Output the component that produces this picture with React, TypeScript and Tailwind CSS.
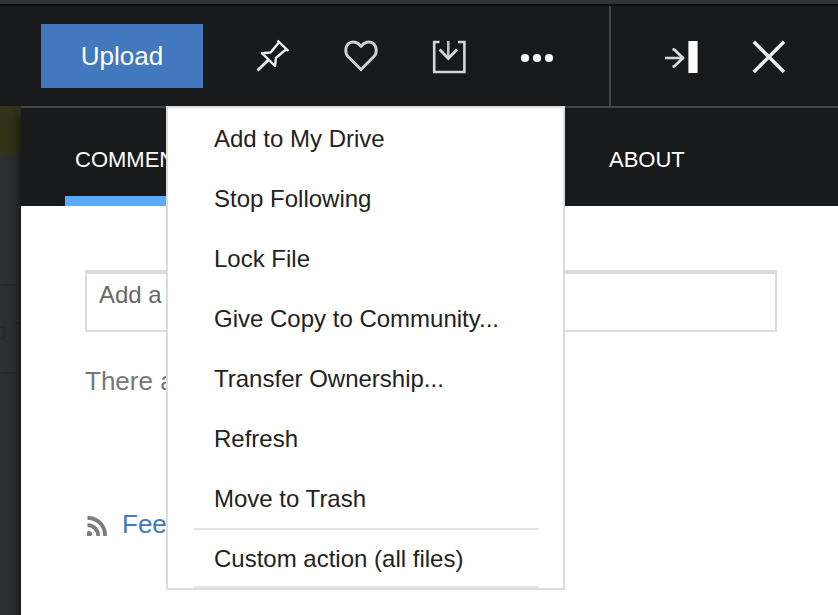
import type { ReactNode } from "react";

type MenuEntry = { label: string; separated?: boolean };

const entries: MenuEntry[] = [
  { label: "Add to My Drive" },
  { label: "Stop Following" },
  { label: "Lock File" },
  { label: "Give Copy to Community..." },
  { label: "Transfer Ownership..." },
  { label: "Refresh" },
  { label: "Move to Trash" },
  { label: "Custom action (all files)", separated: true },
];

function IconButton({ label, children }: { label: string; children: ReactNode }) {
  return (
    <button aria-label={label} className="flex h-16 w-[88px] shrink-0 items-center justify-center pt-0.5">
      {children}
    </button>
  );
}

function PinIcon() {
  return (
    <svg width="36" height="36" viewBox="0 0 36 36" fill="none" stroke="#f2f2f2" strokeWidth="2.4" className="shrink-0">
      <path d="M22.5 1.5L33.5 12M24 3.5L15.5 13.5L7 14.2L20 27L21 18.7L31 10.5" strokeLinejoin="round" />
      <path d="M13.5 20.8L2.5 31.5" strokeWidth="2.8" />
    </svg>
  );
}

function HeartIcon() {
  return (
    <svg width="36" height="36" viewBox="0 0 36 36" fill="none" stroke="#cfd0d0" strokeWidth="2.9" strokeLinejoin="round" className="shrink-0">
      <path d="M18 30.6L4.8 17.3C1.6 13.8 2.4 6.8 5.8 4.4C9.8 1.8 15 3 18 7.4C21 3 26.2 1.8 30.2 4.4C33.6 6.8 34.4 13.8 31.2 17.3Z" />
    </svg>
  );
}

function DownloadIcon() {
  return (
    <svg width="36" height="36" viewBox="0 0 36 36" fill="none" className="shrink-0">
      <path d="M8.5 3H3.2V33H33.4V3H27" stroke="#d4d7d8" strokeWidth="2.6" />
      <path d="M17.3 2V20" stroke="#bfc1c2" strokeWidth="2.6" />
      <path d="M8.6 10.5L17.3 19.4L26 10.5" stroke="#d5d7d8" strokeWidth="2.8" />
    </svg>
  );
}

function MoreIcon() {
  return (
    <svg width="36" height="36" viewBox="0 0 36 36" fill="#fafafa" className="shrink-0">
      <circle cx="6" cy="19" r="4.1" />
      <circle cx="18" cy="19" r="4.1" />
      <circle cx="30" cy="19" r="4.1" />
    </svg>
  );
}

function CollapseIcon() {
  return (
    <svg width="36" height="36" viewBox="0 0 36 36" fill="none" className="shrink-0">
      <path d="M2 19H21" stroke="#d2d2d2" strokeWidth="2.6" />
      <path d="M9.5 10.2L11.5 10.7L20 19L11.5 27.3L9.5 27.8" stroke="#dedede" strokeWidth="2.6" />
      <rect x="25.4" y="2" width="9.2" height="32" fill="#fff" />
    </svg>
  );
}

function CloseIcon() {
  return (
    <svg width="36" height="36" viewBox="0 0 36 36" stroke="#ededed" strokeWidth="3.5" className="shrink-0">
      <path d="M2.8 2.8L33 33M33 2.8L2.8 33" />
    </svg>
  );
}

function FeedIcon() {
  return (
    <svg width="20" height="20" viewBox="0 0 20 20" fill="none" stroke="#7d7d7d" strokeWidth="3.8" className="shrink-0">
      <path d="M0.5 2A17 17 0 0 1 18 20" />
      <path d="M0.5 9.2A10.5 10.5 0 0 1 11.2 20" />
      <circle cx="2.2" cy="17.8" r="2.8" fill="#7d7d7d" stroke="none" />
    </svg>
  );
}

function Menu() {
  return (
    <ul className="absolute top-[106px] left-[166px] z-20 w-[399px] border-2 border-[#dcdcdc] bg-white pr-6 pl-[26px] text-[24px] leading-[60px] text-[#222]">
      {entries.map((entry) => (
        <li
          key={entry.label}
          className={
            entry.separated
              ? "h-[60px] border-y-2 border-[#e3e3e3] pl-5 leading-[58px] whitespace-nowrap"
              : "h-[60px] pt-px pl-5 whitespace-nowrap"
          }
        >
          {entry.label}
        </li>
      ))}
    </ul>
  );
}

export default function App() {
  return (
    <div
      className="relative flex h-[615px] w-[838px] flex-col overflow-hidden bg-[#2e2f31]"
      style={{ fontFamily: '"Liberation Sans", Arial, sans-serif' }}
    >
      <div className="h-1.5 shrink-0 border-b-2 border-[#0c0d0e] bg-[#333335]" />
      <header className="z-10 flex h-[100px] shrink-0 bg-[#18191b]">
        <div className="flex w-[611px] items-start border-r-2 border-[#444] pt-[18px] pl-[41px]">
          <button className="mr-[26px] h-16 w-[162px] bg-[#4178be] text-[26px] leading-[64px] text-white">Upload</button>
          <IconButton label="Pin"><PinIcon /></IconButton>
          <IconButton label="Like"><HeartIcon /></IconButton>
          <IconButton label="Download"><DownloadIcon /></IconButton>
          <IconButton label="More actions"><MoreIcon /></IconButton>
        </div>
        <div className="flex flex-1 items-start pt-[18px] pl-[26px]">
          <IconButton label="Collapse panel"><CollapseIcon /></IconButton>
          <IconButton label="Close"><CloseIcon /></IconButton>
        </div>
      </header>
      <div className="flex min-h-0 flex-1">
        <div className="w-[21px] shrink-0 overflow-hidden">
          <div className="h-12 bg-[#33331a]" />
          <div className="mt-[130px] h-[90px] border-y-2 border-[#2a2b2d] pt-[30px] text-[24px] leading-[30px] whitespace-nowrap text-[#292a2c]">
            <span className="-ml-1.5">o T</span>
          </div>
        </div>
        <main className="flex flex-1 flex-col bg-white shadow-[0_6px_12px_rgba(0,0,0,0.8)]">
          <nav className="flex h-[100px] shrink-0 border-t-2 border-[#444] bg-[#18191b] pl-11 text-[22px] leading-[104px] text-white">
            <div className="w-[534px]">
              <div className="h-[98px] w-[156px] border-b-10 border-[#5aaafa] pl-2.5">COMMENTS</div>
            </div>
            <div className="pl-2.5">ABOUT</div>
          </nav>
          <section className="flex flex-col items-start pt-16 pl-16">
            <div className="h-[62px] w-[692px] border-2 border-t-4 border-[#dcdcdc] pl-3 text-[24px] leading-[42px] text-[#666]">
              Add a comment
            </div>
            <p className="mt-[34px] text-[26px] leading-[30px] text-[#777]">There are no comments.</p>
            <a className="mt-[113px] flex items-center text-[26px] leading-[30px] text-[#4178be]">
              <span className="mt-[3px] mr-[15px] ml-0.5"><FeedIcon /></span>
              Feed for these comments
            </a>
          </section>
        </main>
      </div>
      <Menu />
    </div>
  );
}
